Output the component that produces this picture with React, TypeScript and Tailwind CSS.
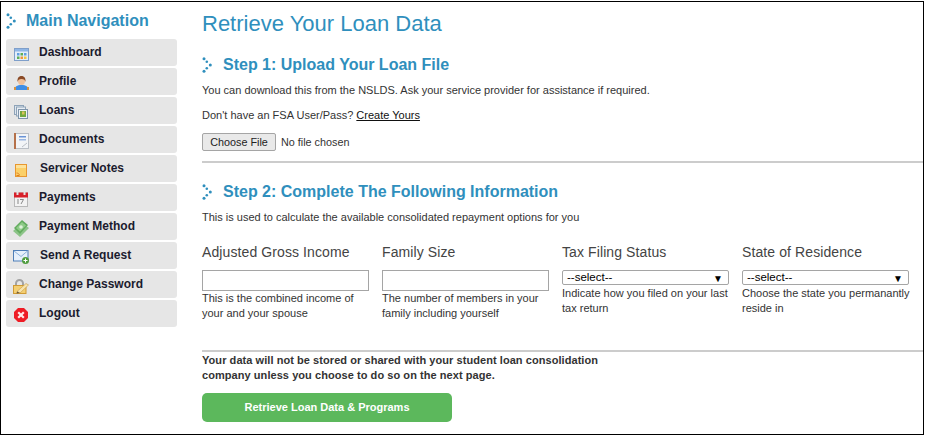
import React from 'react'

const font = { fontFamily: '"Liberation Sans", Arial, sans-serif' }

// little dotted chevron in front of the headings
const Dots = () => (
  <svg width="10" height="16" viewBox="0 0 10 16" className="shrink-0">
    <g fill="#2f8fbd">
      <circle cx="2" cy="1.700" r="1.500" />
      <circle cx="4.800" cy="4.800" r="1.300" />
      <circle cx="8.300" cy="8" r="1.500" />
      <circle cx="4.800" cy="11.200" r="1.300" />
      <circle cx="2" cy="14.300" r="1.500" />
    </g>
  </svg>
)

const IconDashboard = () => (
  <svg width="15" height="13" viewBox="0 0 15 13">
    <rect x="0.500" y="0.500" width="14" height="12" fill="#e3edf9" stroke="#7f9fca" />
    <rect x="1" y="1" width="13" height="2.500" fill="#8fb6e6" />
    <rect x="3" y="5" width="2.500" height="2.500" fill="#5f9fe0" />
    <rect x="6.500" y="5" width="2.500" height="2.500" fill="#5fae54" />
    <rect x="10" y="5" width="2.500" height="2.500" fill="#5f9fe0" />
    <rect x="3" y="8.500" width="2.500" height="2.500" fill="#5fae54" />
    <rect x="6.500" y="8.500" width="2.500" height="2.500" fill="#f0973c" />
    <rect x="10" y="8.500" width="2.500" height="2.500" fill="#f3c63f" />
  </svg>
)

const IconProfile = () => (
  <svg width="15" height="14" viewBox="0 0 15 14">
    <path d="M0.500 14c0-3.500 2.500-5 7-5s7 1.500 7 5z" fill="#3f8ee6" />
    <rect x="0" y="11" width="2" height="3" fill="#d8913f" />
    <rect x="13" y="11" width="2" height="3" fill="#d8913f" />
    <ellipse cx="7.500" cy="5" rx="3.500" ry="4" fill="#f0c09a" />
    <path d="M3.500 6C3 1.500 5.500 0 7.500 0s4.500 1.500 4 6C11 4 10 3 7.500 3s-3.500 1-4 3z" fill="#8a4a26" />
  </svg>
)

const IconLoans = () => (
  <svg width="14" height="14" viewBox="0 0 14 14">
    <rect x="0.500" y="0.500" width="9" height="9" fill="#dfe6ee" stroke="#8ea3b8" />
    <rect x="2.500" y="2" width="9" height="9" fill="#e9eef4" stroke="#8ea3b8" />
    <rect x="4.500" y="4.500" width="9" height="9" fill="#eef2f6" stroke="#7f95ab" />
    <rect x="6" y="6" width="6" height="6" fill="#72a83f" />
    <rect x="8" y="6.500" width="2.500" height="3" fill="#d9c25a" />
  </svg>
)

const IconDocuments = () => (
  <svg width="15" height="16" viewBox="0 0 15 16">
    <rect x="1" y="0.500" width="13.500" height="15" fill="#f2f4f7" stroke="#b9bec5" />
    <rect x="0" y="0" width="2" height="16" fill="#b5714a" />
    <rect x="5" y="3" width="7" height="1.500" fill="#6a93d6" />
    <rect x="5" y="6" width="7" height="1.500" fill="#9ab6e2" />
    <path d="M8 14l5-4" stroke="#b9bec5" />
  </svg>
)

const IconNotes = () => (
  <svg width="12" height="13" viewBox="0 0 12 13">
    <rect x="0.500" y="0.500" width="11" height="12" fill="#fbd069" stroke="#e8972f" />
    <rect x="1" y="1" width="10" height="3" fill="#fde29b" />
    <path d="M1.500 11.500h2.500M1.500 9c1.500 0 3 1 3 2.500" stroke="#e07f1f" fill="none" />
  </svg>
)

const IconPayments = () => (
  <svg width="14" height="16" viewBox="0 0 14 16">
    <rect x="0.500" y="2" width="13" height="13.500" fill="#f3f3f3" stroke="#b8b8b8" />
    <rect x="0" y="1.500" width="14" height="5" fill="#d7202a" />
    <rect x="2.500" y="0" width="2" height="4" fill="#e2e2e2" />
    <rect x="9.500" y="0" width="2" height="4" fill="#e2e2e2" />
    <rect x="3.500" y="8" width="1" height="5" fill="#8a8a8a" />
    <path d="M6 8.500h3.500L7 13" stroke="#8a8a8a" fill="none" />
  </svg>
)

const IconMoney = () => (
  <svg width="16" height="17" viewBox="0 0 16 17">
    <path d="M0 11L9 3l7 5-9 9z" fill="#8cc488" />
    <path d="M1 8l8-8 6 5-8 9z" fill="#62ab5e" />
    <path d="M3 8l6-6 4 3.500-6 6z" fill="#8fcb88" />
    <circle cx="8" cy="7" r="1.800" fill="#dff1da" />
  </svg>
)

const IconMail = () => (
  <svg width="16" height="14" viewBox="0 0 16 14">
    <rect x="0.500" y="0.500" width="14.500" height="10.500" fill="#e6f0fb" stroke="#4f7fb8" />
    <path d="M1 1l7 5.500L14.500 1" stroke="#8fb3dc" fill="none" />
    <circle cx="12.500" cy="10.500" r="3.500" fill="#4f9c3e" />
    <path d="M10.500 10.500h4M12.500 8.500v4" stroke="#ffffff" />
  </svg>
)

const IconLock = () => (
  <svg width="16" height="15" viewBox="0 0 16 15">
    <path d="M3 7V4.500a3.500 3.500 0 0 1 7 0V7" stroke="#a3a3a3" strokeWidth="2" fill="none" />
    <rect x="0.500" y="6.500" width="12.500" height="8" fill="#f4cf72" stroke="#cf9a35" />
    <path d="M4 12.500l9-8 2.500 1.500-8.500 8z" fill="#f7e4ae" stroke="#c69a4a" strokeWidth="0.600" />
    <path d="M4 12.500l3 1.500-3.500.5z" fill="#6b5a3a" />
  </svg>
)

const IconLogout = () => (
  <svg width="14" height="14" viewBox="0 0 14 14">
    <path d="M4 0h6l4 4v6l-4 4H4l-4-4V4z" fill="#ee1c25" />
    <path d="M4.200 4.200l5.600 5.600M9.800 4.200l-5.600 5.600" stroke="#ffe9e9" strokeWidth="2.200" />
  </svg>
)

const navItems = [
  { label: 'Dashboard', icon: <IconDashboard />, labelClass: '' },
  { label: 'Profile', icon: <IconProfile />, labelClass: '' },
  { label: 'Loans', icon: <IconLoans />, labelClass: '' },
  { label: 'Documents', icon: <IconDocuments />, labelClass: '' },
  { label: 'Servicer Notes', icon: <IconNotes />, labelClass: 'ml-[1px]' },
  { label: 'Payments', icon: <IconPayments />, labelClass: '' },
  { label: 'Payment Method', icon: <IconMoney />, labelClass: '' },
  { label: 'Send A Request', icon: <IconMail />, labelClass: 'ml-[1px]' },
  { label: 'Change Password', icon: <IconLock />, labelClass: '' },
  { label: 'Logout', icon: <IconLogout />, labelClass: '' },
]

const StepHeading = ({ children }: { children: React.ReactNode }) => (
  <div className="flex items-center h-[20px]">
    <Dots />
    <h2 className="ml-[11px] text-[16px] font-bold text-[#2f8fbd]">{children}</h2>
  </div>
)

const Field = ({ label, control, help }: { label: string; control: React.ReactNode; help: string }) => (
  <div className="w-[167px]">
    <div className="text-[14px] leading-[16px] text-[#444] tracking-[0.1px]">{label}</div>
    <div className="mt-[10px]">{control}</div>
    <p className="w-[172px] text-[11px] leading-[15px] text-[#333]">{help}</p>
  </div>
)

const TextBox = () => <input className="block w-[167px] h-[21px] border border-[#a5a5a5] bg-white" />

const SelectBox = () => (
  <div className="flex items-center justify-between w-[167px] h-[15px] mt-[1px] mb-[1px] border border-[#a5a5a5] rounded-[2px] pl-[4px] pr-[5px] pt-[1px] text-[11.500px] text-black bg-white">
    <span>--select--</span>
    <span className="text-[10px]">▼</span>
  </div>
)

export default function App() {
  return (
    <div style={font} className="bg-white w-[925px] h-[437px] pt-[1px]">
      <div className="flex w-[924px] h-[434px] border border-black overflow-hidden">
        <aside className="w-[177px] shrink-0 pl-[5px]">
          <div className="flex items-center h-[37px]">
            <Dots />
            <span className="ml-[10px] text-[16px] font-bold text-[#2f8fbd]">Main Navigation</span>
          </div>
          <nav className="flex flex-col gap-[2px]">
            {navItems.map((item) => (
              <div key={item.label} className="flex items-center w-[171px] h-[27px] bg-[#e6e6e6] rounded-[3px]">
                <div className="w-[30px] mr-[3px] flex justify-center pt-[3px]">{item.icon}</div>
                <span className={`text-[12px] font-bold text-[#1b1b2e] -mt-[2px] ${item.labelClass}`}>{item.label}</span>
              </div>
            ))}
          </nav>
        </aside>

        <main className="flex-1 pl-[24px]">
          <h1 className="text-[22px] leading-[28px] mt-[8px] text-[#2f8fbd] font-normal">Retrieve Your Loan Data</h1>
          <div className="mt-[17px]">
            <StepHeading>Step 1: Upload Your Loan File</StepHeading>
          </div>
          <p className="mt-[8px] text-[11px] leading-[14px] text-[#333]">
            You can download this from the NSLDS. Ask your service provider for assistance if required.
          </p>
          <p className="mt-[11px] text-[11px] leading-[14px] text-[#333]">
            Don't have an FSA User/Pass? <a className="text-[#111] underline">Create Yours</a>
          </p>
          <div className="flex items-center mt-[11px]">
            <button className="w-[74px] h-[18px] border border-[#a5a5a5] rounded-[2px] bg-[#e9e9e9] text-[10.800px] text-[#222]">
              Choose File
            </button>
            <span className="ml-[5px] text-[10.800px] text-[#333]">No file chosen</span>
          </div>
          <div className="h-[2px] bg-[#cccccc] mt-[10px]" />

          <div className="mt-[19px]">
            <StepHeading>Step 2: Complete The Following Information</StepHeading>
          </div>
          <p className="mt-[8px] text-[11px] leading-[14px] text-[#333]">
            This is used to calculate the available consolidated repayment options for you
          </p>

          <div className="flex gap-[13px] mt-[20px]">
            <Field
              label="Adjusted Gross Income"
              control={<TextBox />}
              help="This is the combined income of your and your spouse"
            />
            <Field
              label="Family Size"
              control={<TextBox />}
              help="The number of members in your family including yourself"
            />
            <Field
              label="Tax Filing Status"
              control={<SelectBox />}
              help="Indicate how you filed on your last tax return"
            />
            <Field
              label="State of Residence"
              control={<SelectBox />}
              help="Choose the state you permanantly reside in"
            />
          </div>

          <div className="h-[2px] bg-[#cccccc] mt-[29px]" />
          <p className="mt-[1px] w-[430px] text-[11px] leading-[15px] font-bold tracking-[0.06px] text-[#333]">
            Your data will not be stored or shared with your student loan consolidation company unless you choose to do so on the next page.
          </p>
          <button className="mt-[10px] w-[250px] h-[29px] rounded-[5px] bg-[#5cb85c] text-white text-[11px] font-bold">
            Retrieve Loan Data &amp; Programs
          </button>
        </main>
      </div>
    </div>
  )
}
